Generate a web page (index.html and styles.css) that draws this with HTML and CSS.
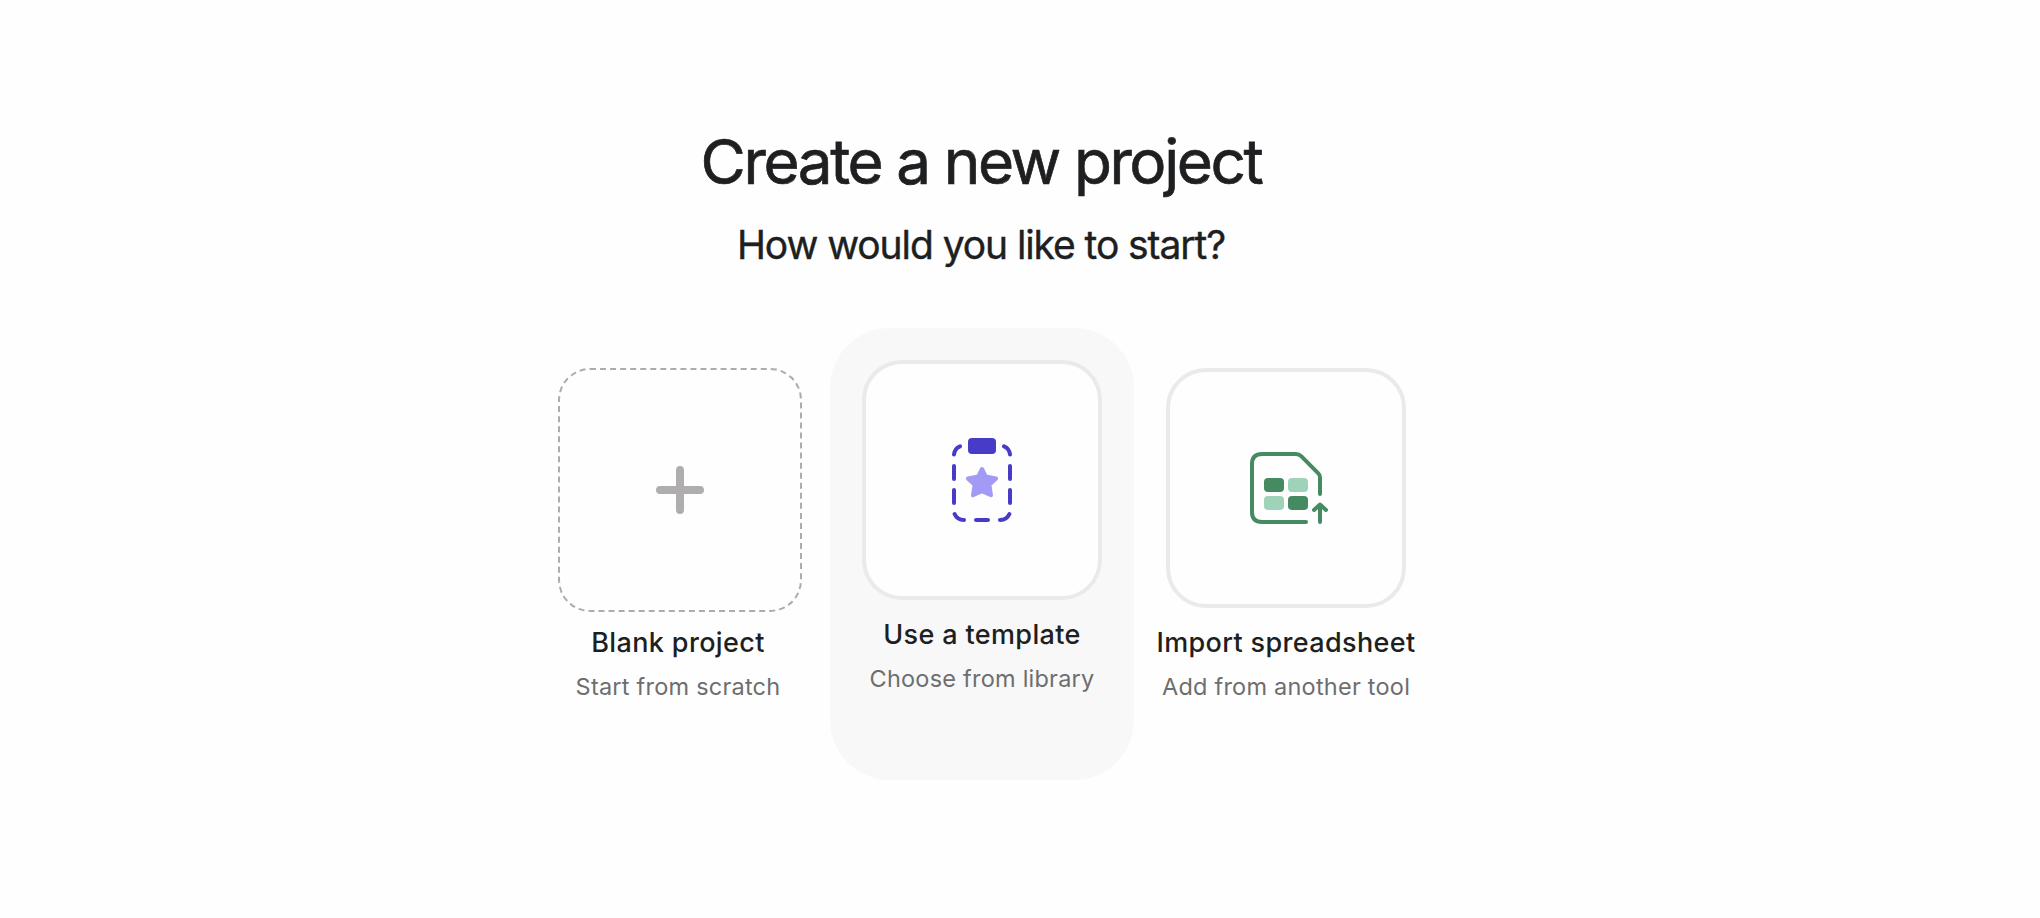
FILE: index.html
```
<!DOCTYPE html>
<html lang="en">
<head>
  <meta charset="UTF-8">
  <meta name="viewport" content="width=device-width, initial-scale=1.0">
  <title>Create a new project</title>
  <link rel="stylesheet" href="styles.css">
</head>
<body>
<main class="container">
  <h1>Create a new project</h1>
  <h2>How would you like to start?</h2>

  <div class="options">
    <a class="option">
      <div class="tile tile-blank">
        <svg class="plus" width="48" height="48" viewBox="0 0 48 48">
          <path d="M24 4v40M4 24h40"/>
        </svg>
      </div>
      <div class="option-title">Blank project</div>
      <div class="option-text">Start from scratch</div>
    </a>

    <a class="option active">
      <div class="tile">
        <svg class="template" width="96" height="96" viewBox="0 0 96 96">
          <path d="M26 14.3Q20.6 16.5 20 22.5M70 14.3Q75.4 16.5 76 22.5M20 34v13M76 34v13M20 58v13M76 58v13M20.6 82Q23 87.7 30 88M42 88h12M66 88Q73 87.7 75.4 82"/>
          <rect x="34" y="6" width="28" height="16" rx="4"/>
          <polygon class="star" points="48,37 51.7,44.5 62.1,46.5 55.4,52.9 57,63.3 48,59.1 39,63.3 40.6,52.9 33.9,46.5 44.3,44.5"/>
        </svg>
      </div>
      <div class="option-title">Use a template</div>
      <div class="option-text">Choose from library</div>
    </a>

    <a class="option">
      <div class="tile">
        <svg class="sheet" width="96" height="96" viewBox="0 0 96 96">
          <path d="M82 54V37Q82 35 80.3 33.3L63.2 16.2Q61 14 58 14H24Q14 14 14 24V72Q14 82 24 82H68M82 82V65M76 70l6-5.5 6 5.5"/>
          <rect x="26" y="38" width="20" height="14" rx="4"/>
          <rect class="light" x="50" y="38" width="20" height="14" rx="4"/>
          <rect class="light" x="26" y="56" width="20" height="14" rx="4"/>
          <rect x="50" y="56" width="20" height="14" rx="4"/>
        </svg>
      </div>
      <div class="option-title">Import spreadsheet</div>
      <div class="option-text">Add from another tool</div>
    </a>
  </div>
</main>
</body>
</html>
```
FILE: styles.css
```
body {
  font-family: Inter, 'Liberation Sans', sans-serif;
  background-color: #fefefe;
  color: #1e1f21;
  margin: 0;
}

.container {
  width: 912px;
  margin-left: 525px;
  padding-top: 120px;
  text-align: center;
}

h1 {
  margin: 0;
  font-size: 62px;
  font-weight: 400;
  line-height: 84px;
  letter-spacing: -2.4px;
  -webkit-text-stroke: 0.7px #1e1f21;
  white-space: nowrap;
}

h2 {
  margin: 16px 0 0;
  font-size: 39px;
  font-weight: 400;
  line-height: 50px;
  letter-spacing: -1.08px;
  -webkit-text-stroke: 0.4px #1e1f21;
  white-space: nowrap;
}

.options {
  display: flex;
  margin: 58px -1px 0 1px;
}

.option {
  box-sizing: border-box;
  width: 304px;
  height: 452px;
  padding: 40px 32px 0;
  border-radius: 60px;
}

.option.active {
  padding-top: 32px;
  background: #f8f8f8;
}

.tile {
  box-sizing: border-box;
  display: flex;
  align-items: center;
  justify-content: center;
  width: 240px;
  height: 240px;
  border: 4px solid #ebeae9;
  border-radius: 40px;
  background: #fefefe;
}

.tile-blank {
  width: 244px;
  height: 244px;
  margin-bottom: -4px;
  border: 2px dashed #afabac;
  border-radius: 32px;
}

.option-title {
  margin: 17px -32px 0;
  font-size: 27px;
  font-weight: 500;
  line-height: 36px;
  letter-spacing: 0.36px;
  white-space: nowrap;
}

.option-text {
  margin: 10px -32px 0;
  font-size: 23.5px;
  line-height: 32px;
  letter-spacing: 0.23px;
  color: #6d6e6f;
  white-space: nowrap;
}

svg path {
  fill: none;
  stroke-width: 4;
  stroke-linecap: round;
  stroke-linejoin: round;
}

.plus path {
  stroke: #afadae;
  stroke-width: 8;
}

.template path { stroke: #473bc7; }
.template rect { fill: #473bc7; }

.star {
  fill: #a29bf5;
  stroke: #a29bf5;
  stroke-width: 4;
  stroke-linejoin: round;
}

.sheet path { stroke: #458a60; }
.sheet rect { fill: #458a60; }
.sheet .light { fill: #9fd3b9; }
```
